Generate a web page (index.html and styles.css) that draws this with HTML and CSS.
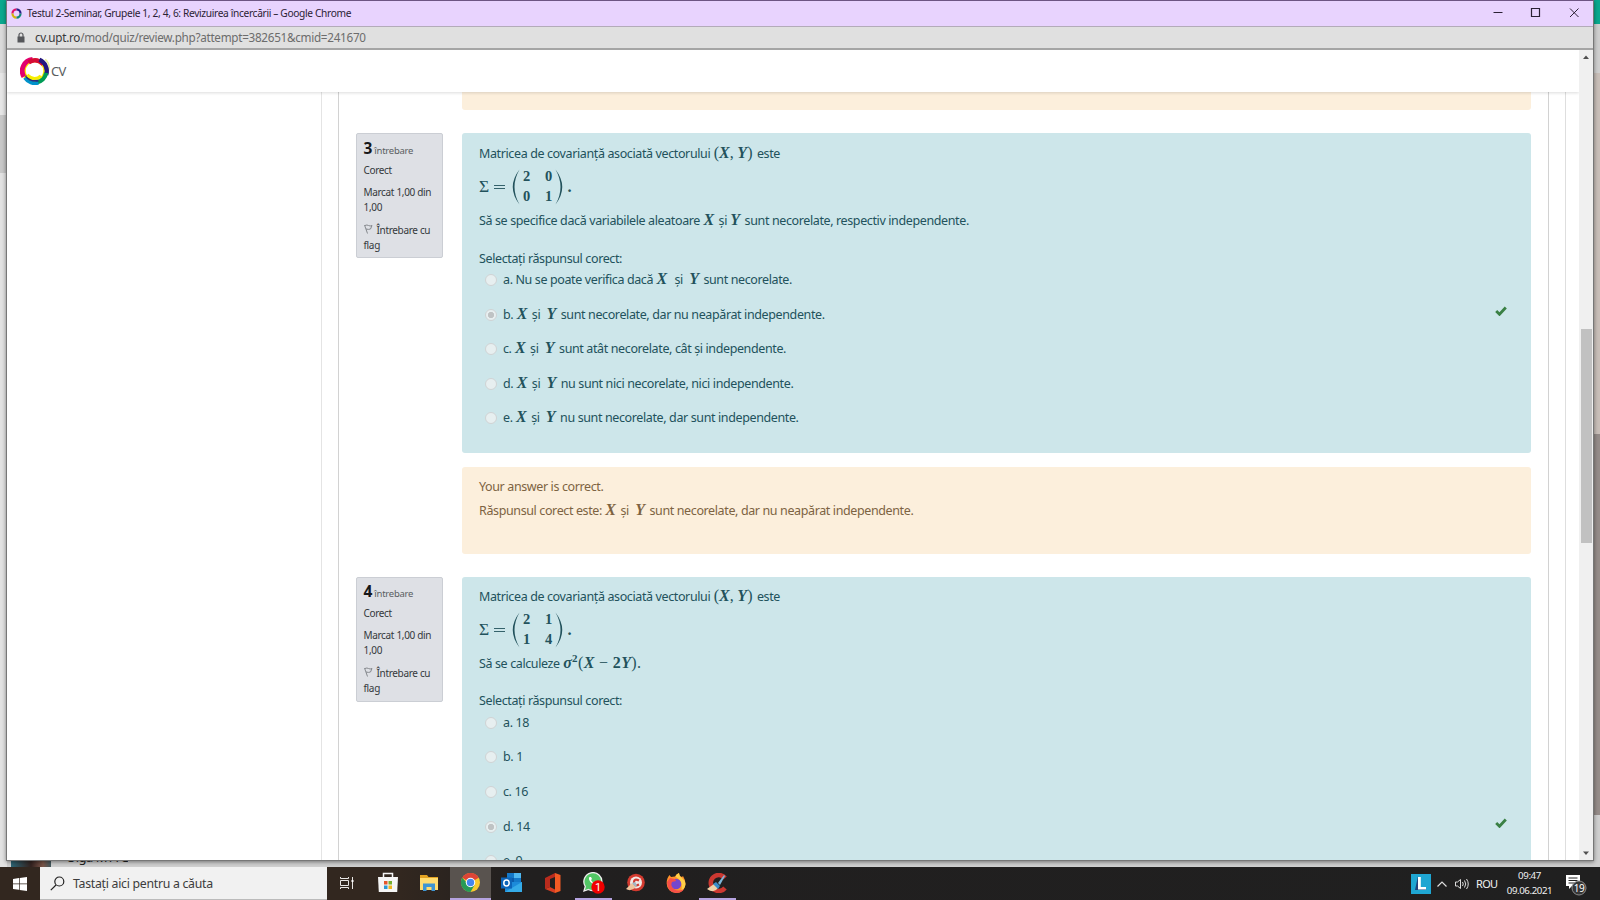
FILE: index.html
```html
<!DOCTYPE html>
<html lang="ro">
<head>
<meta charset="utf-8">
<title>Testul 2-Seminar, Grupele 1, 2, 4, 6: Revizuirea încercării</title>
<link rel="stylesheet" href="styles.css">
</head>
<body>
<div class="desktop">
  <div class="behind">
    <div class="edge edge-left"></div>
    <div class="edge edge-right"></div>
    <div class="contact"><span class="photo"></span><span class="contact-name">Olga M A C</span></div>
  </div>

  <div class="window">
    <div class="titlebar">
      <svg class="fav" viewBox="0 0 30 30"><g fill="none" stroke-width="6"><path d="M15 4A11 11 0 0 0 4 15" stroke="#e0126b"/><path d="M4 15A11 11 0 0 0 15 26" stroke="#d4b40a"/><path d="M15 26A11 11 0 0 0 26 15" stroke="#118a78"/><path d="M26 15A11 11 0 0 0 15 4" stroke="#2a2388"/></g></svg>
      <span class="title">Testul 2-Seminar, Grupele 1, 2, 4, 6: Revizuirea încercării – Google Chrome</span>
      <svg class="controls" viewBox="0 0 100 26" fill="none" stroke="#2b2135"><path d="M3.500 12.500h9"/><path d="M41.500 8.500h8v8h-8z" stroke-width="1.200"/><path d="M80 8.500l8.500 8.500M88.500 8.500l-8.500 8.500"/></svg>
    </div>
    <div class="urlbar">
      <svg class="lock" viewBox="0 0 8 11"><path d="M2 5V3a2 2 0 0 1 4 0v2" fill="none" stroke="#55565a" stroke-width="1.200"/><path d="M.5 4.500h7v6h-7z" fill="#55565a"/></svg>
      <span class="url"><b>cv.upt.ro</b>/mod/quiz/review.php?attempt=382651&amp;cmid=241670</span>
    </div>
    <div class="viewport">
      <div class="page">
        <header class="navbar">
          <svg class="logo" viewBox="0 0 32 30"><g fill="none"><circle cx="15" cy="15" r="11" stroke="#ffe800" stroke-width="4"/><path d="M26 3q6 5 3 13" stroke="#e9ee9a" stroke-width="1.500"/><path d="M4 21A12 12 0 0 1 13 3" stroke="#e2006e" stroke-width="5"/><path d="M9 6Q17 1 24 8" stroke="#d60a35" stroke-width="4.500"/><path d="M20 3.500A12.500 12.500 0 0 1 27 19" stroke="#24177e" stroke-width="4.500"/><path d="M27 17A12.500 12.500 0 0 1 17 27" stroke="#009c56" stroke-width="4.500"/><path d="M19 27A12.500 12.500 0 0 1 5 22" stroke="#0092ca" stroke-width="4"/><path d="M6 20q4 6 13 5" stroke="#243080" stroke-width="2"/><path d="M7.500 19q7 7 14 1" stroke="#f6ee00" stroke-width="3"/></g></svg>
          <span class="brand">CV</span>
        </header>
        <div class="columns">
          <aside class="drawer"></aside>
          <main class="panel">
            <div class="feedback feedback-tail"></div>

            <section class="question">
              <div class="info">
                <div class="no"><b>3</b> întrebare</div>
                <div class="state">Corect</div>
                <div class="grade">Marcat 1,00 din 1,00</div>
                <div class="flag"><svg viewBox="0 0 9 10" fill="none" stroke="#85888d"><path d="M.5 1l3 8.500M1 1.500q2-1 3.500 0t3.500 0L6.500 5q-2 .8-4.500 0"/></svg>Întrebare cu flag</div>
              </div>
              <div class="content">
                <div class="formulation">
                  <p class="line l1">Matricea de covarianță asociată vectorului <span class="m pair"><s>(</s>X<s>,</s> Y<s>)</s></span> este</p>
                  <div class="equation"><span class="sigma">Σ</span><svg class="eq" viewBox="0 0 11 6"><path d="M0 1.500h11M0 4.500h11" stroke="currentColor" stroke-width=".9"/></svg><svg class="paren" viewBox="0 0 9 36"><path d="M8.500 .5Q-5 18 8.500 35.500Q-1.500 18 8.500 .5z"/></svg><span class="matrix"><i>2</i><i>0</i><i>0</i><i>1</i></span><svg class="paren" viewBox="0 0 9 36"><path d="M.5 .5Q14 18 .5 35.500Q10.500 18 .5 .5z"/></svg><span class="dot">.</span></div>
                  <p class="line l3">Să se specifice dacă variabilele aleatoare <span class="m">X</span> și <span class="m">Y</span> sunt necorelate, respectiv independente.</p>
                  <p class="line prompt">Selectați răspunsul corect:</p>
                  <div class="answers">
                    <div class="opt"><span class="radio"></span><p>a. Nu se poate verifica dacă <span class="m">X</span> &nbsp;și &nbsp;<span class="m">Y</span> sunt necorelate.</p></div>
                    <div class="opt"><span class="radio on"></span><p>b. <span class="m">X</span> și &nbsp;<span class="m">Y</span> sunt necorelate, dar nu neapărat independente.</p><svg class="tick" viewBox="0 0 12 10"><path d="M1.200 5l3.300 3.300L10.800 1.500" fill="none" stroke="#3a8044" stroke-width="2.800"/></svg></div>
                    <div class="opt"><span class="radio"></span><p>c. <span class="m">X</span> și &nbsp;<span class="m">Y</span> sunt atât necorelate, cât și independente.</p></div>
                    <div class="opt"><span class="radio"></span><p>d. <span class="m">X</span> și &nbsp;<span class="m">Y</span> nu sunt nici necorelate, nici independente.</p></div>
                    <div class="opt"><span class="radio"></span><p>e. <span class="m">X</span> și &nbsp;<span class="m">Y</span> nu sunt necorelate, dar sunt independente.</p></div>
                  </div>
                </div>
                <div class="feedback">
                  <p class="line">Your answer is correct.</p>
                  <p class="line">Răspunsul corect este: <span class="m">X</span> și &nbsp;<span class="m">Y</span> sunt necorelate, dar nu neapărat independente.</p>
                </div>
              </div>
            </section>

            <section class="question q4">
              <div class="info">
                <div class="no"><b>4</b> întrebare</div>
                <div class="state">Corect</div>
                <div class="grade">Marcat 1,00 din 1,00</div>
                <div class="flag"><svg viewBox="0 0 9 10" fill="none" stroke="#85888d"><path d="M.5 1l3 8.500M1 1.500q2-1 3.500 0t3.500 0L6.500 5q-2 .8-4.500 0"/></svg>Întrebare cu flag</div>
              </div>
              <div class="content">
                <div class="formulation">
                  <p class="line l1">Matricea de covarianță asociată vectorului <span class="m pair"><s>(</s>X<s>,</s> Y<s>)</s></span> este</p>
                  <div class="equation"><span class="sigma">Σ</span><svg class="eq" viewBox="0 0 11 6"><path d="M0 1.500h11M0 4.500h11" stroke="currentColor" stroke-width=".9"/></svg><svg class="paren" viewBox="0 0 9 36"><path d="M8.500 .5Q-5 18 8.500 35.500Q-1.500 18 8.500 .5z"/></svg><span class="matrix"><i>2</i><i>1</i><i>1</i><i>4</i></span><svg class="paren" viewBox="0 0 9 36"><path d="M.5 .5Q14 18 .5 35.500Q10.500 18 .5 .5z"/></svg><span class="dot">.</span></div>
                  <p class="line l3">Să se calculeze <span class="m expr">σ<sup>2</sup><s>(</s>X <s>−</s> <s class="n">2</s>Y<s>).</s></span></p>
                  <p class="line prompt">Selectați răspunsul corect:</p>
                  <div class="answers">
                    <div class="opt"><span class="radio"></span><p>a. 18</p></div>
                    <div class="opt"><span class="radio"></span><p>b. 1</p></div>
                    <div class="opt"><span class="radio"></span><p>c. 16</p></div>
                    <div class="opt"><span class="radio on"></span><p>d. 14</p><svg class="tick" viewBox="0 0 12 10"><path d="M1.200 5l3.300 3.300L10.800 1.500" fill="none" stroke="#3a8044" stroke-width="2.800"/></svg></div>
                    <div class="opt"><span class="radio"></span><p>e. 9</p></div>
                  </div>
                </div>
              </div>
            </section>
          </main>
          <div class="rail"></div>
        </div>
      </div>
      <div class="scrollbar">
        <svg width="14" height="14" viewBox="0 0 14 14"><path d="M4 9l3-3.500L10 9z" fill="#505050"/></svg>
        <div class="track"><div class="thumb"></div></div>
        <svg width="14" height="14" viewBox="0 0 14 14"><path d="M4 5.500l3 3.500 3-3.500z" fill="#505050"/></svg>
      </div>
    </div>
  </div>

  <div class="taskbar">
    <div class="start"><svg width="14" height="14" viewBox="0 0 14 14" fill="#fff"><path d="M0 2l6-.9v5.500H0zM6.700 1L14 0v6.600H6.700zM0 7.300h6v5.500L0 12zM6.700 7.300H14V14l-7.300-1z"/></svg></div>
    <div class="search"><svg width="15" height="15" viewBox="0 0 15 15" fill="none" stroke="#222" stroke-width="1.200"><circle cx="9.300" cy="5.500" r="4.500"/><path d="M6 9L.8 14.200"/></svg><span>Tastați aici pentru a căuta</span></div>
    <div class="apps">
      <div class="app"><svg width="16" height="14" viewBox="0 0 16 14" fill="none" stroke="#e8e6e4"><path d="M1.500 4.500h8v5h-8zM1.500 1v1.500h8V1M1.500 13v-1.500h8V13M13.500 1v12"/><path d="M12.500 4h2v2h-2z" fill="#fff" stroke="none"/></svg></div>
      <div class="app"><svg width="20" height="21" viewBox="0 0 20 21"><path d="M5.500 5V1.500h9V5" fill="none" stroke="#f5f5f5" stroke-width="1.500"/><path d="M0 5h20l-.8 15H.8z" fill="#f5f5f5"/><path d="M6 9h3.500v3.500H6z" fill="#e5562a"/><path d="M10.500 9H14v3.500h-3.500z" fill="#75ae2d"/><path d="M6 13.500h3.500V17H6z" fill="#2a98d4"/><path d="M10.500 13.500H14V17h-3.500z" fill="#efb520"/></svg></div>
      <div class="app"><svg width="18" height="16" viewBox="0 0 18 16"><path d="M0 0h7l1.500 2H18v12H0z" fill="#e3a322"/><path d="M0 3h18v12H0z" fill="#ffdc70"/><path d="M3 16V8.500h12V16h-3.500v-4h-5v4z" fill="#3e95d2"/></svg></div>
      <div class="app active"><svg width="19" height="19" viewBox="0 0 20 20"><circle cx="10" cy="10" r="10" fill="#f8c930"/><path d="M10 10L1.300 5A10 10 0 0 1 18.700 5z" fill="#dc4437"/><path d="M1.300 5A10 10 0 0 0 10 20l4.300-7.500-4.300 2z" fill="#279a56"/><circle cx="10" cy="10" r="5" fill="#fff"/><circle cx="10" cy="10" r="3.900" fill="#4486ef"/></svg></div>
      <div class="app"><svg width="21" height="20" viewBox="0 0 21 20"><path d="M6 0h14v10H6z" fill="#1478c8"/><path d="M13 0h7v5h-7z" fill="#50b8ef"/><path d="M6 5h7v5H6z" fill="#0b5cab"/><path d="M4 9l17 0v10H4z" fill="#1c8ad9"/><path d="M4 19l17-10v10z" fill="#35abe8"/><path d="M0 4.500h11v11H0z" fill="#0d64b8"/><ellipse cx="5.500" cy="10" rx="2.700" ry="3" fill="none" stroke="#fff" stroke-width="1.500"/></svg></div>
      <div class="app"><svg width="16" height="20" viewBox="0 0 16 20"><path d="M10 0l5.500 2v16L10 20z" fill="#f15a24"/><path d="M0 5l10-5v4L5 6v8l-5 2z" fill="#b92b1d"/><path d="M0 16l5-2 5 2.500V20z" fill="#d63c22"/></svg></div>
      <div class="app open"><svg width="22" height="22" viewBox="0 0 22 22"><path d="M1 19l1.300-4.500A9 9 0 1 1 5.500 17.500z" fill="#52c765" stroke="#eee" stroke-width="1.300"/><path d="M6.500 5q-1.500 2 1 5t6 3q2-1 1-2l-2-1-1.500 1Q9 10 8 8l1-1-1-2z" fill="#fff"/><circle cx="15" cy="15" r="6.700" fill="#f00000"/><text x="15" y="19" fill="#fff" font-family="Roboto" font-size="11" text-anchor="middle">1</text></svg></div>
      <div class="app"><svg width="20" height="20" viewBox="0 0 20 20"><circle cx="11" cy="9.500" r="8.800" fill="#d33a2f"/><circle cx="11" cy="9.500" r="6" fill="#f2e8e5"/><path d="M14 7.500q-5-2.500-5 2t5 2" fill="none" stroke="#d33a2f" stroke-width="2.200"/><path d="M1 16l6-6 4 4q-5 5-10 2z" fill="#efc49d"/><path d="M7 10l3-1 2 3-1.500 2z" fill="#a2b8c6"/></svg></div>
      <div class="app"><svg width="20" height="20" viewBox="0 0 20 20"><path d="M10 20A9.500 9.500 0 0 1 .7 10Q.7 5 3.500 2L5 4l4-.5Q10 1 13 0q0 3 3 4l1-1q2.500 4 2.500 8A9.500 9.500 0 0 1 10 20z" fill="#ff922a"/><path d="M13 0q0 3 3 5t3.500 6q-.5 5-4 7 2-10-6-14.500Q10 1 13 0z" fill="#ffd047"/><circle cx="10" cy="11" r="5.300" fill="#7447ce"/><path d="M1 9q0 10 9 11 6 0 8-4-6 3-10 0t-2-7l4-1-1-2-5-1z" fill="#f64f48"/></svg></div>
      <div class="app open"><svg width="20" height="20" viewBox="0 0 20 20"><path d="M18 5A8 8 0 1 0 18 15" fill="none" stroke="#cb3831" stroke-width="4.500"/><path d="M0 16l7-5 4 4q-4 6-11 1z" fill="#efd3aa"/><path d="M6 11l3-2 4 4-2 3z" fill="#3a8dcb"/><path d="M11 10l6-8 1 1-5 9z" fill="#7db7da"/></svg></div>
    </div>
    <div class="tray">
      <svg class="t-l" width="20" height="20" viewBox="0 0 20 20"><path d="M0 0h20v20H0z" fill="#1fa6d2"/><path d="M4 16l3-14v12l8 1v1z" fill="#20427c"/><path d="M7 3h2.800v10H15v2.500H7z" fill="#fff"/></svg>
      <svg class="t-up" width="10" height="6" viewBox="0 0 10 6" fill="none" stroke="#ddd" stroke-width="1.200"><path d="M.5 5.500L5 1l4.500 4.500"/></svg>
      <svg class="t-vol" width="14" height="12" viewBox="0 0 14 12" fill="none" stroke="#ddd"><path d="M.5 4h2L5.500 1.500v9L2.500 8h-2zM7.500 4q1.500 2 0 4M9.500 2.500q2.500 3.500 0 7M11.500 1q3.500 5 0 10"/></svg>
      <span class="lang">ROU</span>
      <span class="clock"><span>09:47</span><span>09.06.2021</span></span>
      <svg class="t-note" width="22" height="22" viewBox="0 0 22 22"><path d="M0 1h14v11H6l-3 3v-3H0z" fill="#fff"/><path d="M2.500 4h9M2.500 6.500h9M2.500 9h6" stroke="#222"/><circle cx="13" cy="14" r="7" fill="#363636" stroke="#8a8a8a"/><text x="13" y="17.800" fill="#fff" font-family="Noto Sans" font-size="10" text-anchor="middle" letter-spacing="-.5">19</text></svg>
    </div>
  </div>
</div>
</body>
</html>
```
FILE: styles.css
```css
* { box-sizing: border-box; }
body { margin: 0; font-family: "Noto Sans", sans-serif; overflow: hidden; }
p { margin: 0; }
svg { display: block; flex: none; }

.desktop { position: relative; width: 1600px; height: 900px; overflow: hidden; background: #cfcfcf; }
.behind { display: flex; justify-content: space-between; height: 867px; }
.edge { width: 7px; }
.edge-left { background: linear-gradient(#0aa88e 24px, #dadada 24px 73px, #e6e6e6 73px 115px, #c8c8c8 115px 173px, #e2e2e2 173px); }
.edge-right { background: linear-gradient(#0aa88e 24px, #cecece 24px 73px, #c8beb8 73px 434px, #958c89 434px 815px, #cfcfcf 815px); }
.contact { position: absolute; left: 11px; top: 846px; display: flex; gap: 15px; height: 21px; overflow: hidden; }
.photo { width: 40px; background: linear-gradient(90deg, #2c6474, #33221f 50%, #7b5548 80%, #40585e); }
.contact-name { font-size: 13px; line-height: 22px; letter-spacing: -.5px; color: #222; white-space: nowrap; }

.window { position: absolute; left: 6px; top: 0; width: 1588px; height: 861px; display: flex; flex-direction: column; border: 1px solid #777; border-top-color: #6d5583; background: #fff; box-shadow: 0 1px 4px rgba(0,0,0,.45); }
.titlebar { display: flex; align-items: center; height: 26px; flex: none; padding-left: 4px; background: #e8d3fe; border-bottom: 1px solid #b3abb9; }
.fav { width: 11px; height: 11px; }
.title { flex: 1; padding: 0 0 2px 5px; font-size: 10.200px; letter-spacing: -.345px; color: #2b2234; white-space: nowrap; }
.controls { width: 100px; height: 26px; margin: -2px 3px 0 0; }
.urlbar { display: flex; align-items: center; gap: 10px; height: 23px; flex: none; padding: 0 0 1px 10px; background: #e0e0e0; border-bottom: 2px solid #a5a5a5; }
.lock { width: 8px; height: 11px; }
.url { font-size: 11.700px; letter-spacing: -.28px; color: #6c6c6c; white-space: nowrap; }
.url b { font-weight: 400; color: #37383a; }

.viewport { display: flex; flex: 1; min-height: 0; }
.page { flex: 1; display: flex; flex-direction: column; min-width: 0; overflow: hidden; }
.navbar { display: flex; align-items: center; height: 42px; flex: none; padding-left: 13px; background: #fff; box-shadow: 0 1px 3px rgba(0,0,0,.14); z-index: 1; }
.logo { width: 31px; height: 30px; }
.brand { font-size: 13px; letter-spacing: -.7px; color: #5a5d60; }
.columns { display: flex; flex: 1; min-height: 0; }
.drawer { width: 315px; flex: none; border-right: 1px solid #e4e4e4; }
.panel { width: 1211px; flex: none; margin: 0 16px; padding: 0 17px; border: 1px solid #d2d2d2; border-width: 0 1px; overflow: hidden; }
.rail { flex: 1; border-left: 1px solid #dedede; }
.scrollbar { display: flex; flex-direction: column; width: 14px; flex: none; background: #f0f0f0; }
.track { flex: 1; padding: 265px 1px 0 2px; }
.thumb { height: 214px; background: #c1c1c1; }

.question { display: flex; align-items: flex-start; gap: 19px; margin-bottom: 23px; }
.info { width: 87px; height: 125px; flex: none; padding: 5px 4px 5px 6.500px; background: #dee0e5; border: 1px solid #cbced4; border-radius: 2px; color: #34383c; font-size: 10px; line-height: 15px; letter-spacing: -.33px; }
.no { height: 18px; line-height: 18px; color: #5a5e62; font-size: 9.500px; letter-spacing: -.25px; white-space: nowrap; }
.no b { font-size: 15.500px; color: #16181a; }
.state { margin-top: 6px; }
.grade { margin-top: 6.500px; }
.flag { margin-top: 8px; }
.flag svg { display: inline-block; width: 9px; height: 10px; margin-right: 4px; }
.q4 .info { padding-top: 4px; }

.content { flex: 1; display: flex; flex-direction: column; gap: 14px; }
.formulation { height: 320px; padding: 11px 17px 0; background: #cde6ea; border-radius: 3px; color: #22525c; }
.line, .opt p { font-size: 12.500px; line-height: 20px; height: 20px; letter-spacing: -.38px; white-space: nowrap; }
.m { font: italic bold 16px/1 "Liberation Serif", serif; letter-spacing: 0; padding: 0 1.600px 0 .5px; }
.m s, .m sup { font-style: normal; font-weight: 400; text-decoration: none; }
.m .n { font-weight: bold; }
.m sup { font-size: 11px; font-weight: bold; line-height: 0; }
.expr { letter-spacing: .35px; }
.equation { display: flex; align-items: center; height: 44px; padding-top: 1px; font: 16.500px/1 "Liberation Serif", serif; }
.sigma { width: 15px; font-size: 17.500px; }
.eq { width: 11px; height: 6px; margin-right: 6px; }
.paren { width: 9px; height: 36px; fill: currentColor; }
.matrix { display: grid; grid-template-columns: 13px 13px; column-gap: 9px; row-gap: 1px; }
.matrix i { font: bold 14.500px/19px "Liberation Serif", serif; text-align: center; }
.dot { padding: 1px 0 0 3.500px; font-weight: bold; }
.l3 { margin-top: 3px; }
.prompt { margin-top: 17.500px; }
.answers { margin-top: 1.500px; }
.opt { display: flex; align-items: center; height: 20px; margin-bottom: 14.600px; padding-left: 6px; }
.opt p { flex: 1; }
.radio { width: 12px; height: 12px; margin-right: 6px; border: 1px solid #d0d3d4; border-radius: 50%; background: #e7eff0; }
.radio.on { background: radial-gradient(circle, #bfc3c4 2.800px, #e7eff0 3.500px); }
.tick { width: 12px; height: 10px; margin: -7px 7px 0 0; }

.feedback { height: 87px; padding: 10px 17px; background: #fcefdc; border-radius: 3px; color: #7d6342; }
.feedback .line + .line { margin-top: 4px; }
.feedback-tail { height: 18px; margin: 0 0 23px 106px; padding: 0; border-radius: 0 0 3px 3px; }
.q4 .formulation { padding-top: 9.500px; height: 330px; }
.q4 .equation { padding-top: 2px; }
.q4 .l3 { margin-top: 3.500px; }
.q4 .prompt { margin-top: 16.500px; }
.q4 .answers { margin-top: 2px; }
.q4 .opt { margin-bottom: 14.700px; }

.taskbar { position: absolute; left: 0; top: 867px; width: 1600px; height: 33px; display: flex; background: linear-gradient(90deg, #32271f, #32271f 400px, #211f1f 520px, #202020); }
.start { display: flex; align-items: center; justify-content: center; width: 40px; }
.search { display: flex; align-items: center; gap: 8px; width: 287px; padding-left: 10px; background: #f1f1f1; border-bottom: 1px solid #bbb; color: #3c3c3c; font-size: 12.300px; letter-spacing: -.28px; white-space: nowrap; }
.apps { display: flex; margin-left: -1px; }
.app { display: flex; align-items: center; justify-content: center; width: 41.200px; border-bottom: 2px solid transparent; }
.app.active { background: #59534f; border-color: #b5a3e0; }
.app.open { border-image: linear-gradient(90deg, transparent 4px, #b5a3e0 4px 37px, transparent 37px) 2; }
.tray { display: flex; align-items: center; margin-left: auto; color: #f0f0f0; font-size: 11px; white-space: nowrap; }
.t-l { margin-right: 6px; }
.t-up { margin-right: 8px; }
.t-vol { margin-right: 7px; }
.lang { width: 26px; letter-spacing: -.7px; }
.clock { display: flex; flex-direction: column; align-items: center; width: 55px; margin-top: -2px; font-size: 9.700px; line-height: 15px; letter-spacing: -.4px; }
.t-note { margin: 2px 12px 0 9px; }
```
